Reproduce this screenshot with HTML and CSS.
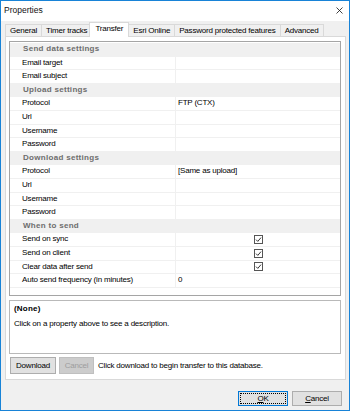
FILE: index.html
```html
<!DOCTYPE html>
<html lang="en">
<head>
  <meta charset="UTF-8">
  <title>Properties</title>
  <link rel="stylesheet" href="styles.css">
</head>
<body>

<div class="window">
  <div class="titlebar">
    <span class="title">Properties</span>
    <svg class="close" width="7" height="7" viewBox="0 0 7 7">
      <path d="M0.5 0.5 L6.5 6.5 M6.5 0.5 L0.5 6.5" stroke="#111" stroke-width="0.8" fill="none"/>
    </svg>
  </div>

  <div class="tabs">
    <div class="tab">General</div>
    <div class="tab">Timer tracks</div>
    <div class="tab active">Transfer</div>
    <div class="tab">Esri Online</div>
    <div class="tab">Password protected features</div>
    <div class="tab">Advanced</div>
  </div>

  <div class="tabpage">
    <div class="grid">
      <div class="cat">Send data settings</div>
      <div class="prop"><span class="name">Email target</span><span class="val"></span></div>
      <div class="prop"><span class="name">Email subject</span><span class="val"></span></div>

      <div class="cat">Upload settings</div>
      <div class="prop"><span class="name">Protocol</span><span class="val">FTP (CTX)</span></div>
      <div class="prop"><span class="name">Url</span><span class="val"></span></div>
      <div class="prop"><span class="name">Username</span><span class="val"></span></div>
      <div class="prop"><span class="name">Password</span><span class="val"></span></div>

      <div class="cat">Download settings</div>
      <div class="prop"><span class="name">Protocol</span><span class="val">[Same as upload]</span></div>
      <div class="prop"><span class="name">Url</span><span class="val"></span></div>
      <div class="prop"><span class="name">Username</span><span class="val"></span></div>
      <div class="prop"><span class="name">Password</span><span class="val"></span></div>

      <div class="cat">When to send</div>
      <div class="prop"><span class="name">Send on sync</span><span class="val check"><svg width="9" height="9" viewBox="0 0 9 9"><rect x="0.5" y="0.5" width="8" height="8" fill="#fff" stroke="#555"/><path d="M2 4.6 L3.8 6.4 L7 2.6" stroke="#333" stroke-width="1" fill="none"/></svg></span></div>
      <div class="prop"><span class="name">Send on client</span><span class="val check"><svg width="9" height="9" viewBox="0 0 9 9"><rect x="0.5" y="0.5" width="8" height="8" fill="#fff" stroke="#555"/><path d="M2 4.6 L3.8 6.4 L7 2.6" stroke="#333" stroke-width="1" fill="none"/></svg></span></div>
      <div class="prop"><span class="name">Clear data after send</span><span class="val check"><svg width="9" height="9" viewBox="0 0 9 9"><rect x="0.5" y="0.5" width="8" height="8" fill="#fff" stroke="#555"/><path d="M2 4.6 L3.8 6.4 L7 2.6" stroke="#333" stroke-width="1" fill="none"/></svg></span></div>
      <div class="prop"><span class="name">Auto send frequency (in minutes)</span><span class="val">0</span></div>
    </div>

    <div class="desc">
      <div class="desc-title">(None)</div>
      <p>Click on a property above to see a description.</p>
    </div>

    <div class="actions">
      <button class="btn download">Download</button>
      <button class="btn stop" disabled>Cancel</button>
      <span class="hint">Click download to begin transfer to this database.</span>
    </div>
  </div>

  <div class="footer">
    <button class="btn dlg ok"><u>O</u>K</button>
    <button class="btn dlg"><u>C</u>ancel</button>
  </div>
</div>

</body>
</html>
```

FILE: styles.css
```css
* {
  box-sizing: border-box;
}

body {
  margin: 0;
  font-family: "Liberation Sans", Arial, sans-serif;
  font-size: 8px;
  letter-spacing: -0.2px;
  color: #000;
  background: #fff;
}

.window {
  width: 350px;
  height: 411px;
  border: 1px solid #1883d7;
  background: #f0f0f0;
  display: flex;
  flex-direction: column;
}

.titlebar {
  height: 20px;
  flex: none;
  background: #fff;
  display: flex;
  align-items: center;
  justify-content: space-between;
  padding: 0 6px 2px 3px;
}

.title {
  font-size: 8.5px;
  letter-spacing: 0;
  color: #111;
}

/* Вкладки */
.tabs {
  height: 15px;
  flex: none;
  display: flex;
  align-items: flex-end;
  padding-left: 4px;
}

.tab {
  height: 12px;
  line-height: 11px;
  padding: 0 4px;
  margin-right: -1px;
  background: #f0f0f0;
  border: 1px solid #d9d9d9;
  border-bottom: none;
  white-space: nowrap;
}

.tab.active {
  position: relative;
  z-index: 1;
  height: 15px;
  margin: 0 -1px -1px -2px;
  padding: 0 5px 2px;
  background: #fff;
}

.tabpage {
  height: 344px;
  flex: none;
  margin: 0 3px 0 4px;
  border: 1px solid #d9d9d9;
  background: #fff;
  padding: 4px 4px 4px 3px;
}

/* Сетка свойств */
.grid {
  height: 255px;
  border: 1px solid #a5a5a5;
  padding-top: 1px;
  background: #fff;
}

.cat,
.prop {
  height: 13.6px;
  line-height: 12.6px;
  border-bottom: 1px solid #f0f0f0;
}

.cat {
  background: #f0f0f0;
  padding-left: 13px;
  font-weight: bold;
  letter-spacing: 0.3px;
  color: #6d6d6d;
}

.prop {
  display: flex;
}

.name {
  width: 166px;
  flex: none;
  padding-left: 12px;
  border-right: 1px solid #f0f0f0;
  white-space: nowrap;
}

.val {
  flex: 1;
  padding-left: 2px;
}

.val.check {
  display: flex;
  align-items: center;
  justify-content: center;
  padding-left: 0;
}

.desc {
  height: 54px;
  margin-top: 4px;
  border: 1px solid #b9b9b9;
  padding: 3px 4px;
}

.desc-title {
  font-weight: bold;
  letter-spacing: 0.2px;
  line-height: 10px;
}

.desc p {
  margin: 5px 0 0;
  line-height: 10px;
}

.actions {
  display: flex;
  align-items: center;
  margin-top: 3px;
  padding-left: 1px;
  height: 17px;
}

.btn {
  height: 17px;
  padding: 0;
  font-family: inherit;
  font-size: 8px;
  letter-spacing: -0.2px;
  color: #000;
  background: #e1e1e1;
  border: 1px solid #adadad;
}

.btn.download {
  width: 46px;
}

.btn.stop {
  width: 35px;
  margin-left: 3px;
}

.btn:disabled {
  background: #cccccc;
  border-color: #bfbfbf;
  color: #9d9d9d;
}

.hint {
  margin-left: 4px;
  white-space: nowrap;
}

.footer {
  flex: 1;
  display: flex;
  justify-content: flex-end;
  gap: 4px;
  padding: 11px 7px 0 0;
}

.btn.dlg {
  width: 50px;
  height: 15px;
}

.btn.ok {
  border-color: #0078d7;
  outline: 1px dotted #000;
  outline-offset: -3px;
}
```
